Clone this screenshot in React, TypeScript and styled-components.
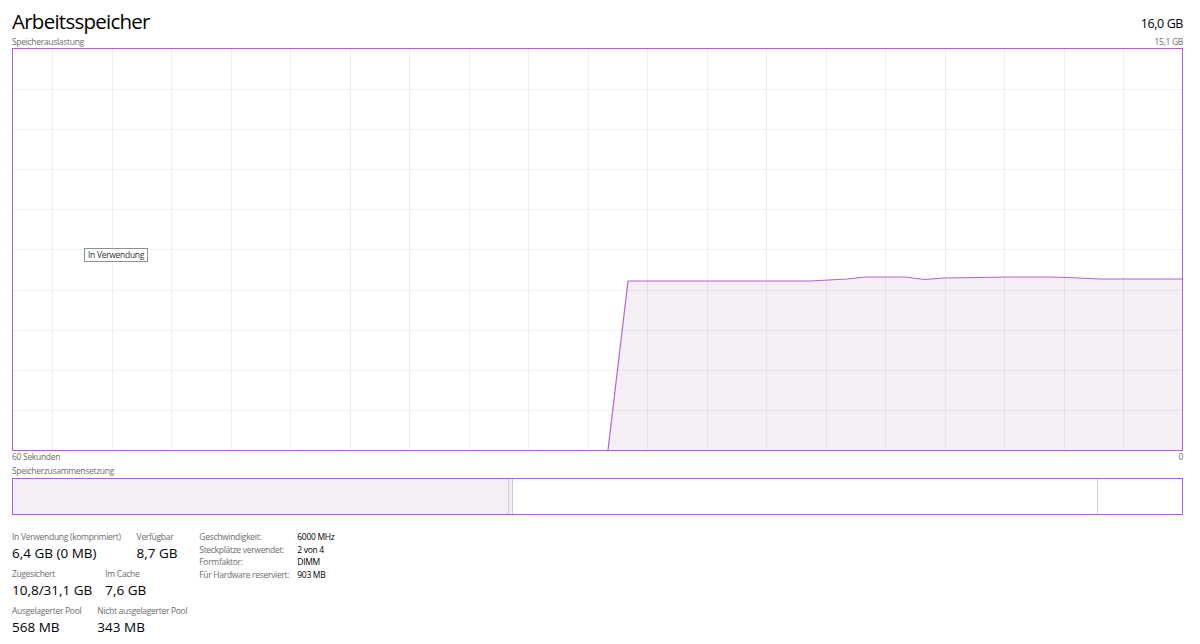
import React from "react";
import styled, { createGlobalStyle } from "styled-components";

const GlobalStyle = createGlobalStyle`
  html, body {
    margin: 0;
    padding: 0;
    background: #ffffff;
  }
  body {
    font-family: "Open Sans", "Noto Sans", "Liberation Sans", sans-serif;
    color: #000;
  }
`;

const PURPLE = "#b55ed2";
const FILL = "#f3eff5";

const Page = styled.div`
  width: 1200px;
  height: 644px;
  box-sizing: border-box;
  padding: 6px 17px 0 12px;
  overflow: hidden;
`;

const HeaderRow = styled.div`
  display: flex;
  justify-content: space-between;
  align-items: flex-end;
`;

const Title = styled.h1`
  margin: 0;
  font-size: 20.5px;
  font-weight: 400;
  line-height: 30px;
  letter-spacing: -0.75px;
`;

const Total = styled.span`
  font-size: 12.5px;
  line-height: 20px;
  letter-spacing: -0.4px;
  padding-bottom: 2px;
`;

const CaptionRow = styled.div<{ $top?: number }>`
  display: flex;
  justify-content: space-between;
  margin-top: ${(p) => p.$top ?? 0}px;
  font-size: 8.5px;
  line-height: 12px;
  letter-spacing: -0.3px;
  color: #6d6d6d;
`;

const ChartBox = styled.div`
  position: relative;
  height: 401px;
  border: 1px solid ${PURPLE};
  background: #fff;

  svg {
    display: block;
  }
`;

const Legend = styled.span`
  position: absolute;
  left: 71px;
  top: 199px;
  padding: 0 3px;
  border: 1px solid #8a948a;
  background: #fff;
  font-size: 8.5px;
  line-height: 12px;
  letter-spacing: -0.3px;
  color: #333;
`;

const CompositionBar = styled.div`
  display: flex;
  height: 35px;
  margin-top: 1px;
  border: 1px solid ${PURPLE};
`;

const Segment = styled.div<{ $width?: number; $fill?: string; $edge?: boolean }>`
  ${(p) => (p.$width ? `width: ${p.$width}px;` : "flex: 1;")}
  flex-shrink: 0;
  box-sizing: border-box;
  background: ${(p) => p.$fill ?? "#fff"};
  ${(p) => (p.$edge ? "border-right: 1px solid #e2c6ec;" : "")}
`;

const Modified = styled.div`
  width: 5px;
  flex-shrink: 0;
  box-sizing: border-box;
  border-left: 1px solid #dcc2e6;
  border-right: 1px solid #dcc2e6;
  background: #f2ecf5;
`;

const Stats = styled.div`
  display: flex;
  gap: 12px;
  margin-top: 16px;
`;

const StatColumn = styled.div`
  display: flex;
  flex-direction: column;
  gap: 5px;
`;

const StatRow = styled.div<{ $gap: number }>`
  display: flex;
  gap: ${(p) => p.$gap}px;
`;

const Stat = styled.div`
  display: flex;
  flex-direction: column;
`;

const StatLabel = styled.span`
  font-size: 8.5px;
  line-height: 12px;
  letter-spacing: -0.3px;
  color: #6d6d6d;
`;

const StatValue = styled.span`
  font-size: 13.5px;
  line-height: 19px;
  margin-top: 1px;
  color: #000;
`;

const Props = styled.div`
  display: grid;
  grid-template-columns: 98px auto;
  grid-auto-rows: 12.7px;
  font-size: 8.5px;
  line-height: 12.7px;
  letter-spacing: -0.3px;
`;

const PropLabel = styled.span`
  color: #6d6d6d;
`;

const PropValue = styled.span`
  color: #000;
`;

const W = 1169;
const H = 401;

const line: [number, number][] = [
  [595, 401],
  [615, 232],
  [797, 232],
  [834, 230],
  [852, 228],
  [892, 228],
  [912, 230.5],
  [930, 229],
  [967, 228.5],
  [994, 228],
  [1034, 228],
  [1054, 228.5],
  [1087, 230],
  [1170, 230],
];

const UsageChart: React.FC = () => {
  const vLines = Array.from({ length: 19 }, (_, i) => 39.5 + Math.round(i * 59.5));
  const hLines = Array.from({ length: 9 }, (_, i) => 40.5 + Math.round(i * 40.1));
  const pts = line.map(([x, y]) => `${x},${y}`).join(" ");
  const area = `${pts} ${W},${H} 595,${H}`;
  return (
    <ChartBox>
      <svg width={W} height={H} viewBox={`0 0 ${W} ${H}`}>
        <polygon points={area} fill={FILL} />
        {vLines.map((x) => (
          <line key={"v" + x} x1={x} y1={0} x2={x} y2={H} stroke="rgba(190,110,215,0.14)" strokeWidth={1} />
        ))}
        {hLines.map((y) => (
          <line key={"h" + y} x1={0} y1={y} x2={W} y2={y} stroke="rgba(190,110,215,0.14)" strokeWidth={1} />
        ))}
        <polyline points={pts} fill="none" stroke="#b463d0" strokeWidth={1.2} />
      </svg>
      <Legend>In Verwendung</Legend>
    </ChartBox>
  );
};

const App: React.FC = () => {
  return (
    <>
      <GlobalStyle />
      <Page>
        <HeaderRow>
          <Title>Arbeitsspeicher</Title>
          <Total>16,0 GB</Total>
        </HeaderRow>
        <CaptionRow>
          <span>Speicherauslastung</span>
          <span>15,1 GB</span>
        </CaptionRow>
        <UsageChart />
        <CaptionRow $top={0}>
          <span>60 Sekunden</span>
          <span>0</span>
        </CaptionRow>
        <CaptionRow $top={2}>
          <span>Speicherzusammensetzung</span>
        </CaptionRow>
        <CompositionBar>
          <Segment $width={495} $fill={FILL} />
          <Modified />
          <Segment $width={585} $edge />
          <Segment />
        </CompositionBar>
        <Stats>
          <StatColumn>
            <StatRow $gap={16}>
              <Stat>
                <StatLabel>In Verwendung (komprimiert)</StatLabel>
                <StatValue>6,4 GB (0 MB)</StatValue>
              </Stat>
              <Stat>
                <StatLabel>Verfügbar</StatLabel>
                <StatValue>8,7 GB</StatValue>
              </Stat>
            </StatRow>
            <StatRow $gap={13}>
              <Stat>
                <StatLabel>Zugesichert</StatLabel>
                <StatValue>10,8/31,1 GB</StatValue>
              </Stat>
              <Stat>
                <StatLabel>Im Cache</StatLabel>
                <StatValue>7,6 GB</StatValue>
              </Stat>
            </StatRow>
            <StatRow $gap={16}>
              <Stat>
                <StatLabel>Ausgelagerter Pool</StatLabel>
                <StatValue>568 MB</StatValue>
              </Stat>
              <Stat>
                <StatLabel>Nicht ausgelagerter Pool</StatLabel>
                <StatValue>343 MB</StatValue>
              </Stat>
            </StatRow>
          </StatColumn>
          <Props>
            <PropLabel>Geschwindigkeit:</PropLabel>
            <PropValue>6000 MHz</PropValue>
            <PropLabel>Steckplätze verwendet:</PropLabel>
            <PropValue>2 von 4</PropValue>
            <PropLabel>Formfaktor:</PropLabel>
            <PropValue>DIMM</PropValue>
            <PropLabel>Für Hardware reserviert:</PropLabel>
            <PropValue>903 MB</PropValue>
          </Props>
        </Stats>
      </Page>
    </>
  );
};

export default App;
